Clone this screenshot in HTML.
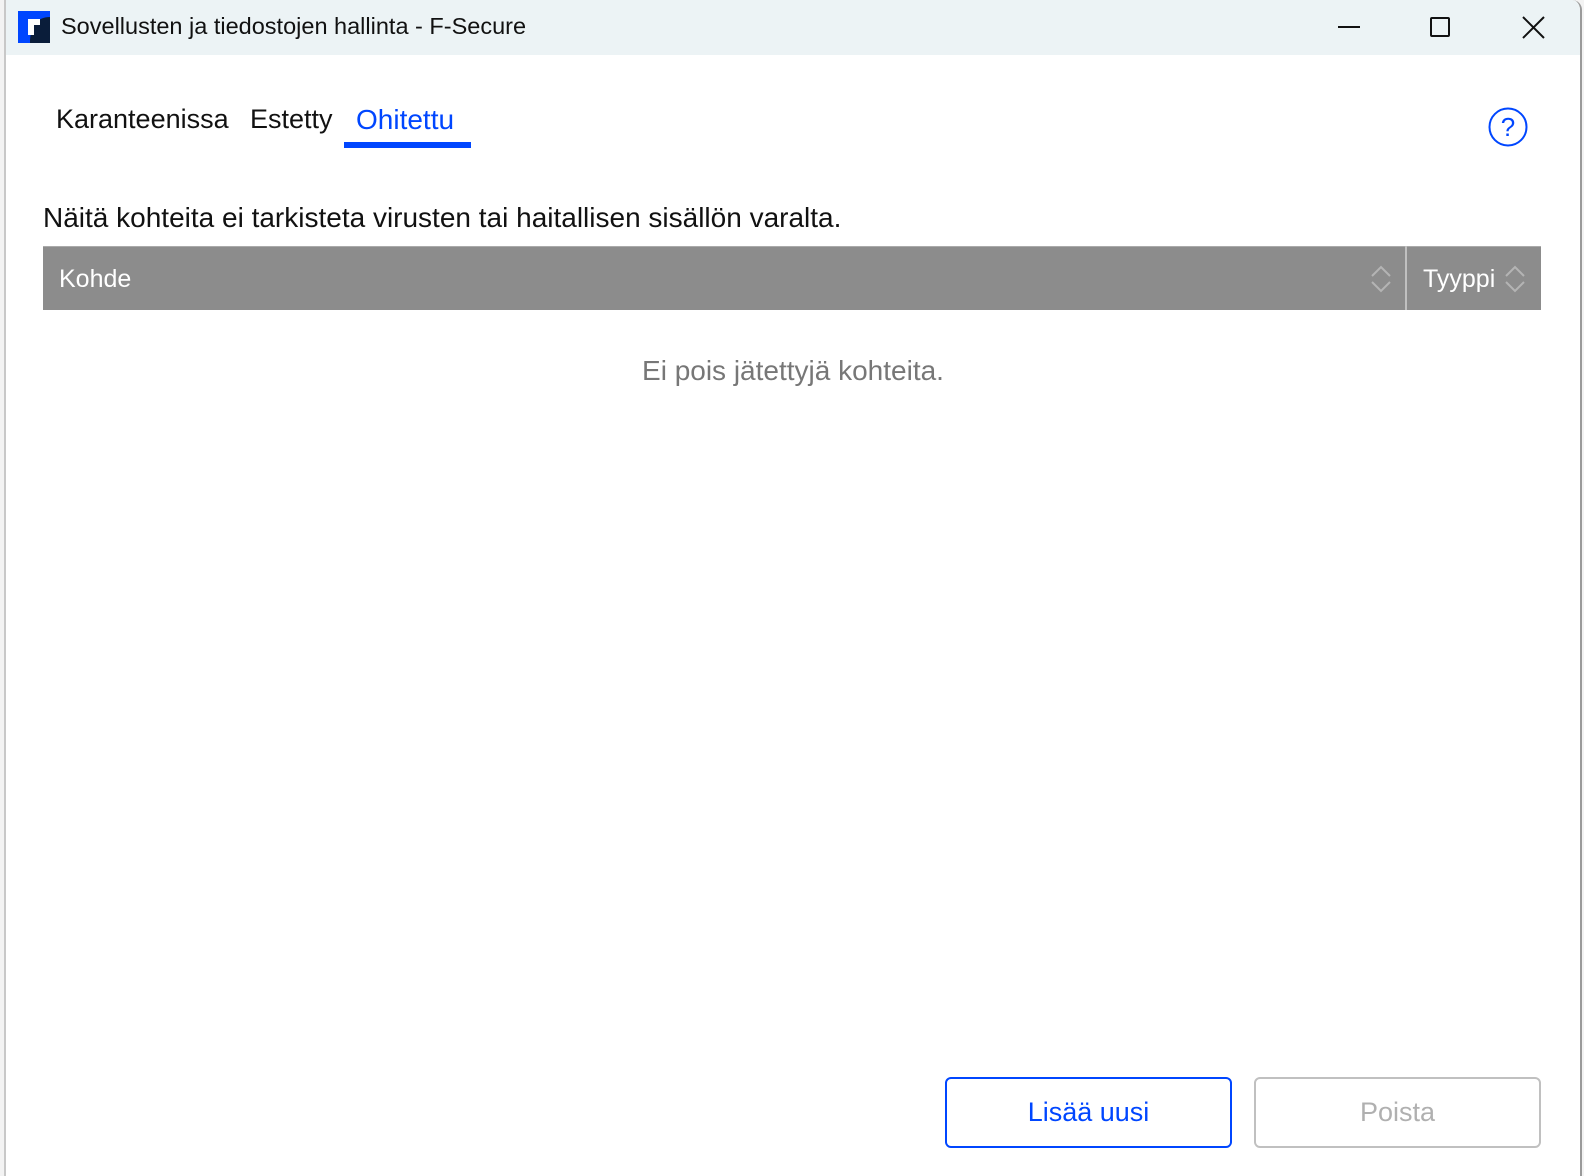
<!DOCTYPE html>
<html><head><meta charset="utf-8"><style>
*{margin:0;padding:0;box-sizing:border-box}
body{width:1584px;height:1176px;background:#f3f3f3;position:relative;overflow:hidden;font-family:"Segoe UI","Liberation Sans",sans-serif}
.win{position:absolute;left:4px;top:0;width:1578px;height:1176px;background:#fff;border-left:2px solid #c8c8c8;border-right:2px solid #9a9a9a;border-top-right-radius:10px;overflow:hidden}
.tb{position:absolute;left:0;top:0;right:0;height:55px;background:#ecf3f5}
.t{position:absolute;font-size:22px;color:#111;white-space:nowrap}
.abs{position:absolute}
</style></head><body>
<div class="win">
 <div class="tb">
  <svg class="abs" style="left:12px;top:11px" width="32" height="32" viewBox="0 0 32 32">
   <rect width="32" height="32" fill="#0a1d3a"/><path d="M0 0H32V6C20 6 12 14 12 32H0Z" fill="#0046ff"/>
   <path d="M10 8H22V14H16V24H10Z" fill="#fff"/>
  </svg>
  <div class="t" style="left:55px;top:13px;font-size:23.5px">Sovellusten ja tiedostojen hallinta - F-Secure</div>
  <div class="abs" style="left:1332px;top:26px;width:22px;height:2px;background:#111"></div>
  <div class="abs" style="left:1424px;top:17px;width:20px;height:20px;border:2px solid #111;border-radius:2px"></div>
  <svg class="abs" style="left:1516px;top:16px" width="23" height="23"><path d="M1 1L22 22M22 1L1 22" stroke="#111" stroke-width="2"/></svg>
 </div>
 <div class="t" style="left:50px;top:104px;font-size:27px">Karanteenissa</div>
 <div class="t" style="left:244px;top:104px;font-size:27px">Estetty</div>
 <div class="t" style="left:350px;top:104px;font-size:28px;color:#0046ff">Ohitettu</div>
 <div class="abs" style="left:338px;top:142px;width:127px;height:6px;background:#0046ff"></div>
 <svg class="abs" style="left:1482px;top:107px" width="40" height="40"><circle cx="20" cy="20" r="18.5" fill="none" stroke="#0046ff" stroke-width="2"/><text x="20" y="29" text-anchor="middle" font-size="26" fill="#0046ff" font-family="Liberation Sans">?</text></svg>
 <div class="t" style="left:37px;top:202px;font-size:28px">Näitä kohteita ei tarkisteta virusten tai haitallisen sisällön varalta.</div>
 <div class="abs" style="left:37px;top:246px;width:1498px;height:64px;background:#8c8c8c;border-top:1px solid #aaa"></div>
 <div class="abs" style="left:1399px;top:246px;width:2px;height:64px;background:#c0c0c0"></div>
 <div class="t" style="left:53px;top:265px;font-size:25px;color:#fff">Kohde</div>
 <div class="t" style="left:1417px;top:265px;font-size:25px;color:#fff">Tyyppi</div>
 <svg class="abs" style="left:1364px;top:264px" width="22" height="30"><path d="M2 12L11 3L20 12M2 18L11 27L20 18" fill="none" stroke="#b4b4b4" stroke-width="2"/></svg>
 <svg class="abs" style="left:1498px;top:264px" width="22" height="30"><path d="M2 12L11 3L20 12M2 18L11 27L20 18" fill="none" stroke="#b4b4b4" stroke-width="2"/></svg>
 <div class="t" style="left:0;width:1574px;text-align:center;top:355px;font-size:28px;color:#777">Ei pois jätettyjä kohteita.</div>
 <div class="abs" style="left:939px;top:1077px;width:287px;height:71px;border:2px solid #0046ff;border-radius:6px;color:#0046ff;font-size:27px;text-align:center;line-height:67px">Lisää uusi</div>
 <div class="abs" style="left:1248px;top:1077px;width:287px;height:71px;border:2px solid #c0c0c0;border-radius:6px;color:#b0b0b0;font-size:27px;text-align:center;line-height:67px">Poista</div>
</div>
</body></html>
